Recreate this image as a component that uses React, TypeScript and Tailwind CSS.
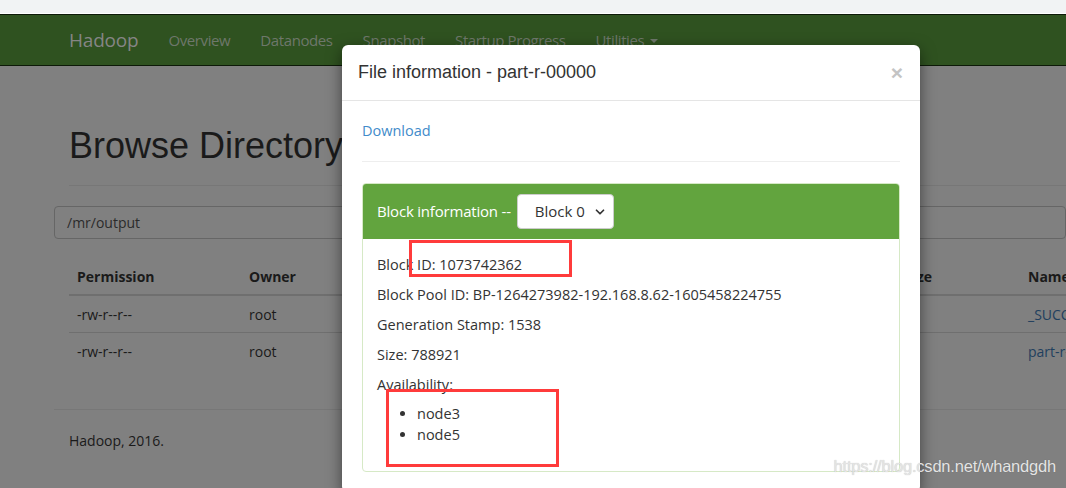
import { ChevronDown } from 'lucide-react'

const SEGOE = "font-['Open_Sans',sans-serif]"
const ARIAL = "font-['Liberation_Sans',Arial,sans-serif]"

const NAV_ITEMS = ['Overview', 'Datanodes', 'Snapshot', 'Startup Progress']

const ROWS = [
  { permission: '-rw-r--r--', owner: 'root', name: '_SUCCESS' },
  { permission: '-rw-r--r--', owner: 'root', name: 'part-r-00000' },
]

// The page behind the modal is drawn with its colours already halved (backdrop at 50% black).
function Navbar() {
  return (
    <div className="h-[52px] border-y border-[#0d1a08] bg-[#2f5220]">
      <div className={`flex h-full items-center pl-[69px] ${SEGOE}`}>
        <span className="mr-[30px] text-[19px] tracking-[-0.2px] text-[#858585]">Hadoop</span>
        {NAV_ITEMS.map((item) => (
          <span key={item} className="mr-[30px] text-[15px] tracking-[-0.4px] text-[#6e776b]">
            {item}
          </span>
        ))}
        <span className="inline-flex items-center gap-[6px] text-[15px] tracking-[-0.4px] text-[#6e776b]">
          Utilities
          <span className="mt-[2px] border-x-[4px] border-t-[4px] border-x-transparent border-t-current" />
        </span>
      </div>
    </div>
  )
}

function BrowsePage() {
  return (
    <div className={`overflow-hidden bg-[#808080] text-[#1a1a1a] ${SEGOE}`}>
      <div className="pl-[69px] pt-[60px]">
        <h1 className={`text-[36px] leading-[40px] text-[#1a1a1a] ${ARIAL}`}>Browse Directory</h1>
        <div className="mt-[19px] border-t border-[#777]" />
      </div>
      <div className="pl-[54px] pt-[20px]">
        <div className="flex h-[33px] items-center rounded-[4px] border border-[#666] px-[12px] text-[14px] text-[#2b2b2b]">
          /mr/output
        </div>
      </div>
      <div className="pl-[69px] pt-[19px] text-[14px]">
        <div className="flex h-[38px] items-center border-b-2 border-[#6f6f6f] font-bold">
          <span className="w-[172px] shrink-0 pl-[8px]">Permission</span>
          <span className="w-[656px] shrink-0 pl-[8px]">Owner</span>
          <span className="w-[123px] shrink-0 pl-[8px]">Size</span>
          <span className="shrink-0 pl-[8px]">Name</span>
        </div>
        {ROWS.map((row, index) => (
          <div
            key={row.name}
            className={`flex h-[37px] items-center ${index === 0 ? 'border-b border-[#6f6f6f]' : ''}`}
          >
            <span className="w-[172px] shrink-0 pl-[8px]">{row.permission}</span>
            <span className="w-[779px] shrink-0 pl-[8px]">{row.owner}</span>
            <span className="shrink-0 whitespace-nowrap pl-[8px] text-[#1f3f5e]">{row.name}</span>
          </div>
        ))}
      </div>
      <div className="mt-[39px] ml-[54px] border-t border-[#777]" />
      <div className="pl-[69px] pt-[20px] pb-[60px] text-[14px]">Hadoop, 2016.</div>
    </div>
  )
}

function BlockPanel() {
  return (
    <div className="relative rounded-[4px] border border-[#d6e9c6]">
      <div className="flex h-[55px] items-center rounded-t-[3px] bg-[#62a43e] pl-[14px] text-[15px] text-white">
        <span className="tracking-[-0.2px]">Block information --</span>
        <div className="ml-[6px] flex h-[35px] w-[97px] items-center justify-between rounded-[4px] border border-[#ccc] bg-white pl-[17px] pr-[6px] text-[15px] text-[#333]">
          <span>Block 0</span>
          <ChevronDown className="h-[14px] w-[14px]" strokeWidth={3} />
        </div>
      </div>
      <div className="px-[14px] pt-[14px] pb-[26px] text-[14.5px] leading-[24px] text-[#333]">
        <div className="flex flex-col gap-[6px]">
          <div>Block ID: 1073742362</div>
          <div>Block Pool ID: BP-1264273982-192.168.8.62-1605458224755</div>
          <div>Generation Stamp: 1538</div>
          <div>Size: 788921</div>
          <div>Availability:</div>
        </div>
        <ul className="mt-[6px] list-disc pl-[40px] leading-[21px]">
          <li>node3</li>
          <li>node5</li>
        </ul>
      </div>
      <div className="absolute left-[46px] top-[56px] h-[37px] w-[163px] border-[3px] border-[#ff3b3b]" />
      <div className="absolute left-[23px] top-[205px] h-[78px] w-[173px] border-[3px] border-[#ff3b3b]" />
    </div>
  )
}

function FileModal() {
  return (
    <div className="absolute left-[342px] top-[31px] w-[578px] rounded-[6px] bg-white shadow-[0_5px_15px_rgba(0,0,0,0.5)]">
      <div className="flex h-[56px] items-center justify-between border-b border-[#e5e5e5] pl-[16px] pr-[17px]">
        <h4 className={`text-[18px] text-[#333] ${ARIAL}`}>File information - part-r-00000</h4>
        <span className={`text-[21px] font-bold leading-none text-[#c4c4c4] ${ARIAL}`}>×</span>
      </div>
      <div className={`px-[20px] pt-[17px] pb-[20px] ${SEGOE}`}>
        <a className="text-[14.5px] text-[#428bca]">Download</a>
        <div className="mt-[19px] mb-[21px] border-t border-[#eee]" />
        <BlockPanel />
      </div>
    </div>
  )
}

export default function App() {
  return (
    <div className="relative h-[488px] w-[1066px] overflow-hidden bg-[#808080]">
      <div className="h-[13px] bg-[#f1f3f4]" />
      <div className="h-px bg-white" />
      <div className="relative">
        <Navbar />
        <BrowsePage />
        <FileModal />
      </div>
      <div
        className={`absolute right-[10px] bottom-[9px] text-[16.5px] tracking-[-0.2px] text-[#e4e4e4] [text-shadow:0_0_1px_rgba(0,0,0,0.25)] ${ARIAL}`}
      >
        https://blog.csdn.net/whandgdh
      </div>
    </div>
  )
}
